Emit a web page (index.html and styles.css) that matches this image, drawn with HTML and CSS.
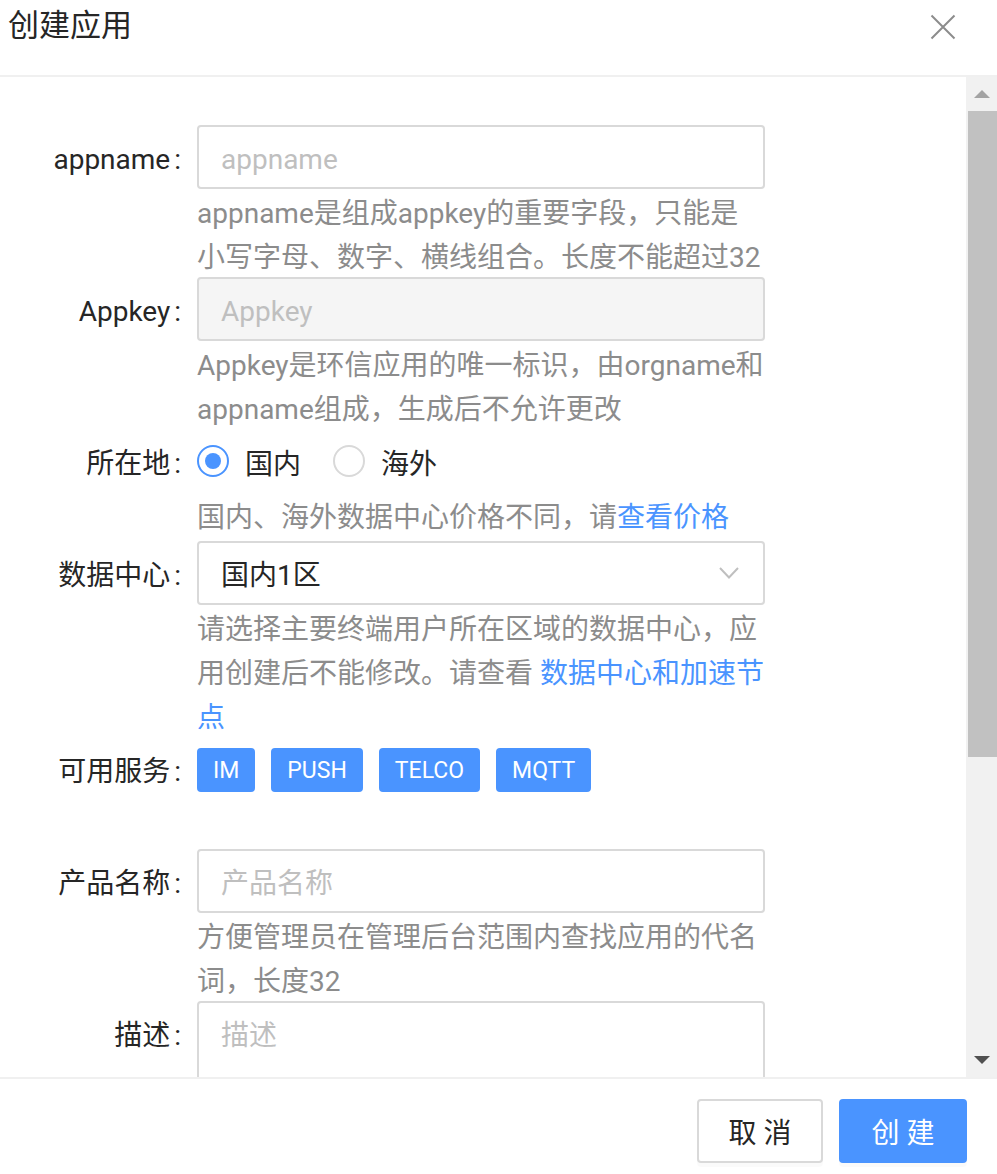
FILE: index.html
```html
<!DOCTYPE html>
<html lang="zh-CN">
<head>
<meta charset="utf-8">
<title>创建应用</title>
<link rel="stylesheet" href="styles.css">
</head>
<body>
<div class="modal">
  <div class="header">
    <div class="title">创建应用</div>
    <svg class="close" width="26" height="26" viewBox="0 0 26 26"><path d="M1.5 1.5 L24.5 24.5 M24.5 1.5 L1.5 24.5" stroke="#8c8c8c" stroke-width="2" fill="none"/></svg>
  </div>
  <div class="main">
    <div class="content">
      <div class="item">
        <div class="label">appname</div>
        <div class="ctrl">
          <div class="input"><span class="ph">appname</span></div>
          <div class="help"><div class="ln">appname是组成appkey的重要字段，只能是</div><div class="ln">小写字母、数字、横线组合。长度不能超过32</div></div>
        </div>
      </div>
      <div class="item">
        <div class="label">Appkey</div>
        <div class="ctrl">
          <div class="input disabled"><span class="ph">Appkey</span></div>
          <div class="help"><div class="ln">Appkey是环信应用的唯一标识，由orgname和</div><div class="ln">appname组成，生成后不允许更改</div></div>
        </div>
      </div>
      <div class="item radio-item">
        <div class="label">所在地</div>
        <div class="ctrl">
          <div class="radios">
            <label class="radio"><span class="dot checked"></span><span class="rtext">国内</span></label>
            <label class="radio"><span class="dot"></span><span class="rtext">海外</span></label>
          </div>
          <div class="help"><div class="ln">国内、海外数据中心价格不同，请<a class="link">查看价格</a></div></div>
        </div>
      </div>
      <div class="item">
        <div class="label">数据中心</div>
        <div class="ctrl">
          <div class="input select"><span class="val">国内1区</span>
            <svg class="arrow" width="20" height="12" viewBox="0 0 20 12"><path d="M1 1 L10 10.5 L19 1" stroke="#bfbfbf" stroke-width="2" fill="none"/></svg>
          </div>
          <div class="help"><div class="ln">请选择主要终端用户所在区域的数据中心，应</div><div class="ln">用创建后不能修改。请查看 <a class="link">数据中心和加速节</a></div><div class="ln"><a class="link">点</a></div></div>
        </div>
      </div>
      <div class="item spaced">
        <div class="label">可用服务</div>
        <div class="ctrl">
          <div class="tags">
            <span class="tag">IM</span><span class="tag">PUSH</span><span class="tag">TELCO</span><span class="tag">MQTT</span>
          </div>
        </div>
      </div>
      <div class="item">
        <div class="label">产品名称</div>
        <div class="ctrl">
          <div class="input"><span class="ph">产品名称</span></div>
          <div class="help"><div class="ln">方便管理员在管理后台范围内查找应用的代名</div><div class="ln">词，长度32</div></div>
        </div>
      </div>
      <div class="item">
        <div class="label">描述</div>
        <div class="ctrl">
          <div class="input textarea"><span class="ph">描述</span></div>
        </div>
      </div>
    </div>
    <div class="scrollbar">
      <div class="sb-btn"><span class="tri up"></span></div>
      <div class="thumb"></div>
      <div class="sb-space"></div>
      <div class="sb-btn"><span class="tri down"></span></div>
    </div>
  </div>
  <div class="footer">
    <button class="btn">取 消</button>
    <button class="btn primary">创 建</button>
  </div>
</div>
</body>
</html>
```

FILE: styles.css
```css
* { box-sizing: border-box; }
html, body { margin: 0; padding: 0; }
body {
  width: 997px;
  height: 1174px;
  overflow: hidden;
  background: #fff;
  font-family: Roboto, "Noto Sans CJK SC", sans-serif;
  color: #262626;
}
.modal {
  display: flex;
  flex-direction: column;
  height: 1174px;
}
.header {
  height: 77px;
  flex: none;
  border-bottom: 2px solid #f0f0f0;
  display: flex;
  align-items: flex-start;
  justify-content: space-between;
  padding: 4px 41px 0 8px;
}
.title {
  font-size: 31px;
  line-height: 44px;
  color: #262626;
}
.close { margin-top: 10px; }
.main {
  flex: 1;
  display: flex;
  overflow: hidden;
}
.content {
  flex: 1;
  padding-top: 48px;
  overflow: hidden;
}
.item {
  display: flex;
  align-items: flex-start;
}
.item.spaced { margin-bottom: 48px; }
.item.radio-item { margin-bottom: 4px; }
.label {
  width: 197px;
  flex: none;
  text-align: right;
  font-size: 28px;
  line-height: 64px;
  height: 64px;
  padding-top: 3px;
  color: #262626;
  white-space: nowrap;
}
.label::after {
  content: ":";
  margin: 0 16px 0 4px;
}
.ctrl {
  width: 568px;
  flex: none;
}
.input {
  height: 64px;
  border: 2px solid #d9d9d9;
  border-radius: 4px;
  padding: 5px 22px 0;
  font-size: 28px;
  line-height: 54px;
  display: flex;
  align-items: center;
  background: #fff;
}
.input.disabled { background: #f5f5f5; }
.ph { color: #bfbfbf; }
.select { justify-content: space-between; padding-top: 0; }
.select .val { color: #262626; padding-top: 5px; }
.arrow { margin-right: 2px; }
.textarea {
  height: 120px;
  align-items: flex-start;
  padding-top: 11px;
  line-height: 44px;
}
.help {
  font-size: 28px;
  line-height: 44px;
  color: #8c8c8c;
}
.ln {
  white-space: nowrap;
  height: 44px;
  padding-top: 3px;
}
.link { color: #4a94ff; text-decoration: none; }
.radios {
  height: 64px;
  display: flex;
  align-items: center;
}
.radio {
  display: flex;
  align-items: center;
  margin-right: 16px;
  font-size: 28px;
  color: #262626;
}
.dot {
  width: 32px;
  height: 32px;
  border: 2px solid #d9d9d9;
  border-radius: 50%;
  display: flex;
  align-items: center;
  justify-content: center;
}
.dot.checked { border-color: #4a94ff; }
.dot.checked::after {
  content: "";
  width: 16px;
  height: 16px;
  border-radius: 50%;
  background: #4a94ff;
}
.rtext { padding: 2px 16px 0; }
.tags {
  height: 64px;
  padding-top: 2px;
  display: flex;
  align-items: center;
  gap: 16px;
}
.tag {
  height: 44px;
  line-height: 40px;
  padding: 1px 14px 0;
  border: 2px solid #4a94ff;
  border-radius: 4px;
  background: #4a94ff;
  color: #fff;
  font-size: 23px;
}
.scrollbar {
  width: 31px;
  flex: none;
  background: #f1f1f1;
  display: flex;
  flex-direction: column;
}
.sb-btn {
  height: 34px;
  display: flex;
  align-items: center;
  justify-content: center;
  flex: none;
}
.thumb {
  height: 646px;
  margin-left: 2px;
  background: #c1c1c1;
  flex: none;
}
.sb-space { flex: 1; }
.tri {
  width: 0;
  height: 0;
  border-left: 8px solid transparent;
  border-right: 8px solid transparent;
}
.tri.up { border-bottom: 8px solid #a3a3a3; }
.tri.down { border-top: 8px solid #505050; }
.footer {
  height: 97px;
  flex: none;
  border-top: 2px solid #f0f0f0;
  display: flex;
  justify-content: flex-end;
  align-items: flex-start;
  gap: 16px;
  padding: 20px 30px 0 0;
}
.btn {
  height: 64px;
  width: 126px;
  border: 2px solid #d9d9d9;
  border-radius: 4px;
  background: #fff;
  color: #262626;
  font-family: Roboto, "Noto Sans CJK SC", sans-serif;
  font-size: 28px;
  box-shadow: 0 4px 0 rgba(0,0,0,0.02);
  padding: 0;
}
.btn.primary {
  width: 128px;
  background: #4a94ff;
  border-color: #4a94ff;
  color: #fff;
}
```
